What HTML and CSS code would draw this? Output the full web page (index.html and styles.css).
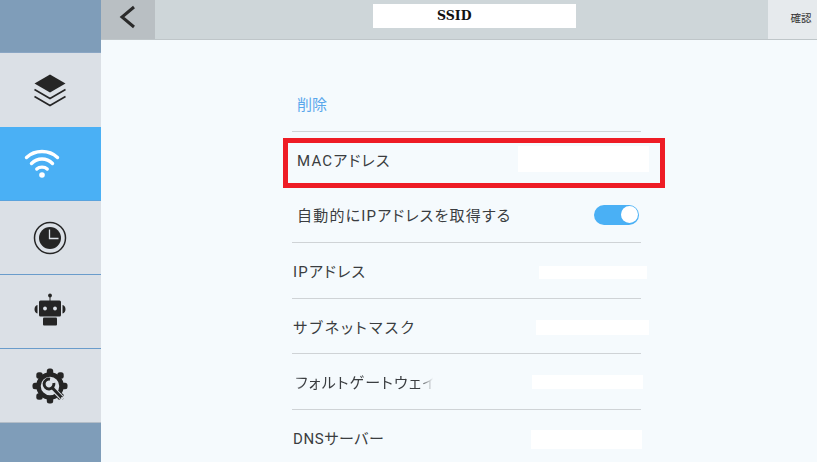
FILE: index.html
```html
<!DOCTYPE html>
<html lang="ja">
<head>
<meta charset="utf-8">
<title>SSID</title>
<link rel="stylesheet" href="styles.css">
</head>
<body>
<div class="app">
  <nav class="sidebar">
    <div class="side-cap side-cap-top"></div>
    <a class="nav-item">
      <svg class="icon" viewBox="0 0 40 40"><path class="fill" d="M20 4.500 35.500 13.500 20 22.500 4.500 13.500Z"/><path class="line" d="M4.500 19.500 20 28.500 35.500 19.500M4.500 26.500 20 35.500 35.500 26.500"/></svg>
    </a>
    <a class="nav-item active">
      <svg class="icon icon-wifi" viewBox="0 0 40 40"><path class="wifi" d="M4.500 12.500C13 4.500 27 4.500 35.500 12.500M9.500 18.500C15.500 12.500 24.500 12.500 30.500 18.500M14.800 24C17.500 21.500 22.500 21.500 25.200 24"/><circle class="wifi-dot" cx="20" cy="30" r="2.800"/></svg>
    </a>
    <a class="nav-item">
      <svg class="icon" viewBox="0 0 40 40"><circle class="ring" cx="20" cy="20" r="15.500"/><circle class="fill" cx="20" cy="20" r="11"/><path class="hands" d="M19.500 11.500V20.500H28.500"/></svg>
    </a>
    <a class="nav-item">
      <svg class="icon" viewBox="0 0 40 40"><circle class="fill" cx="20" cy="3.500" r="1.900"/><path class="thin" d="M20 4V9"/><rect class="fill" x="9" y="8.500" width="22" height="16" rx="1.500"/><rect class="fill" x="13" y="25.500" width="14" height="8" rx="1"/><path class="fill" d="M7.500 13V21.500C3.500 20.500 3.500 14 7.500 13ZM32.500 13V21.500C36.500 20.500 36.500 14 32.500 13Z"/><circle class="eye" cx="15" cy="16.500" r="1.900"/><circle class="eye" cx="25" cy="16.500" r="1.900"/></svg>
    </a>
    <a class="nav-item">
      <svg class="icon" viewBox="0 0 40 40"><circle class="gear-ring" cx="20" cy="20" r="11.500"/><g class="teeth"><rect x="16.800" y="2.500" width="6.400" height="6.500" rx="2.500"/><rect x="16.800" y="31" width="6.400" height="6.500" rx="2.500"/><rect x="2.500" y="16.800" width="6.500" height="6.400" rx="2.500"/><rect x="31" y="16.800" width="6.500" height="6.400" rx="2.500"/><rect x="6.300" y="6.300" width="6.400" height="6.400" rx="2.500"/><rect x="27.300" y="6.300" width="6.400" height="6.400" rx="2.500"/><rect x="6.300" y="27.300" width="6.400" height="6.400" rx="2.500"/><rect x="27.300" y="27.300" width="6.400" height="6.400" rx="2.500"/></g><path class="wrench-halo" d="M24.500 24.500 33 33"/><path class="wrench-head" d="M23.800 17A4.900 4.900 0 1 1 20 13.200"/><path class="wrench" d="M22 21.500 32 32"/><circle class="eye" cx="32" cy="32" r="1"/></svg>
    </a>
    <div class="side-cap"></div>
  </nav>
  <main class="main">
    <header class="topbar">
      <button class="back" aria-label="戻る">
        <svg class="back-icon" viewBox="0 0 54 40"><path d="M33 7 21 17 33 27"/></svg>
      </button>
      <div class="title"><span>SSID</span></div>
      <button class="confirm">確認</button>
    </header>
    <section class="content">
      <ul class="list">
        <li class="row row-delete">削除</li>
        <li class="row row-mac">
          <span>MACアドレス</span>
          <span class="mask mask-mac"></span>
          <span class="highlight"></span>
        </li>
        <li class="row">
          <span>自動的にIPアドレスを取得する</span>
          <span class="toggle"><span class="knob"></span></span>
        </li>
        <li class="row row-low">
          <span class="label-left">IPアドレス</span>
          <span class="mask mask-ip"></span>
        </li>
        <li class="row row-low">
          <span class="label-left label-wide">サブネットマスク</span>
          <span class="mask mask-subnet"></span>
        </li>
        <li class="row row-low">
          <span class="fade">フォルトゲートウェイ</span>
          <span class="mask mask-gateway"></span>
        </li>
        <li class="row row-low">
          <span class="label-left label-tight">DNSサーバー</span>
          <span class="mask mask-dns"></span>
        </li>
      </ul>
    </section>
  </main>
</div>
</body>
</html>
```

FILE: styles.css
```css
* { box-sizing: border-box; }
html, body { margin: 0; padding: 0; }
body {
  width: 817px;
  height: 462px;
  overflow: hidden;
  font-family: Roboto, "Noto Sans CJK JP", sans-serif;
  color: #3a3d40;
}
.app { display: flex; width: 817px; height: 462px; overflow: hidden; }

/* sidebar */
.sidebar { width: 101px; flex: none; display: flex; flex-direction: column; background: #dbe0e6; }
.side-cap { flex: 1; background: #7f9db9; border-top: 1px solid #b4bec8; }
.side-cap-top { flex: none; height: 53px; border-top: 0; border-bottom: 1px solid #8aa6c4; }
.nav-item {
  height: 74px;
  flex: none;
  display: flex;
  align-items: center;
  justify-content: center;
  border-bottom: 1px solid #6a9ccb;
  padding-right: 1px;
}
.nav-item:nth-child(2) { border-bottom-color: #dbe0e6; }
.nav-item:nth-child(6) { border-bottom: 0; height: 73px; }
.nav-item.active { background: #4ab0f5; border-bottom-color: #5aa3dd; }
.icon { width: 40px; height: 40px; display: block; }
.icon-wifi { margin-right: 17px; margin-top: 2px; }
.fill { fill: #252525; }
.line { fill: none; stroke: #252525; stroke-width: 1.600; }
.thin { fill: none; stroke: #252525; stroke-width: 1; }
.ring { fill: none; stroke: #252525; stroke-width: 1.500; }
.hands { fill: none; stroke: #dbe0e6; stroke-width: 1.300; }
.eye { fill: #dbe0e6; }
.wifi { fill: none; stroke: #fff; stroke-width: 3.400; stroke-linecap: round; }
.wifi-dot { fill: #fff; }
.gear-ring { fill: none; stroke: #252525; stroke-width: 4.500; }
.teeth { fill: #252525; }
.wrench { fill: none; stroke: #252525; stroke-width: 3; }
.wrench-halo { fill: none; stroke: #dbe0e6; stroke-width: 5; }
.wrench-head { fill: none; stroke: #252525; stroke-width: 3; }

/* header */
.main { flex: 1; min-width: 0; display: flex; flex-direction: column; background: #f5fafd; }
.topbar {
  height: 40px;
  flex: none;
  display: flex;
  background: #ced6d9;
  border-bottom: 1px solid #bfc6c9;
}
.back { width: 54px; flex: none; padding: 0; border: 0; background: #b9bfc3; display: block; }
.back-icon { display: block; width: 54px; height: 40px; }
.back-icon path { fill: none; stroke: #2a2a2a; stroke-width: 3; }
.title {
  width: 203px;
  height: 24px;
  margin: 4px 0 0 218px;
  padding-left: 64px;
  background: #fff;
  font: bold 12.500px/23px "DejaVu Serif", serif;
  color: #111;
}
.confirm {
  width: 49px;
  height: 39px;
  margin-left: auto;
  border: 0;
  padding: 0 0 5px 17px;
  background: #e6eaed;
  font: 10.500px "Noto Sans CJK JP", sans-serif;
  color: #333;
}

/* list */
.content { flex: 1; min-height: 0; overflow: hidden; padding-left: 191px; }
.list { list-style: none; margin: 0; padding: 0; width: 349px; }
.row {
  height: 55.500px;
  display: flex;
  align-items: center;
  justify-content: space-between;
  padding: 0 0 0 5px;
  border-bottom: 1px solid #cfd3d6;
  font-size: 15px;
  letter-spacing: 1.200px;
  font-feature-settings: "palt";
  white-space: nowrap;
}
.row-delete { height: 92px; padding-top: 35px; letter-spacing: 0; color: #5aa7ec; }
.row-low { padding-top: 1px; }
.row-mac { position: relative; border-bottom-color: transparent; }
.label-left { margin-left: -4px; }
.label-wide { letter-spacing: 2.200px; }
.label-tight { letter-spacing: .6px; }
.highlight {
  position: absolute;
  left: -9px;
  top: 6px;
  width: 382px;
  height: 50px;
  border: 5px solid #ee1c25;
}
.fade {
  width: 142px;
  margin-left: -2px;
  overflow: hidden;
  -webkit-mask-image: linear-gradient(90deg, rgba(0,0,0,.5), #000 8px, #000 125px, transparent 138px);
  mask-image: linear-gradient(90deg, rgba(0,0,0,.5), #000 8px, #000 125px, transparent 138px);
}
.mask { display: block; background: #fff; }
.mask-mac { width: 131px; height: 26px; margin-right: -8px; }
.mask-ip { width: 108px; height: 13px; margin-right: -6px; margin-top: 3px; }
.mask-subnet { width: 113px; height: 15px; margin-right: -8px; margin-top: 3px; }
.mask-gateway { width: 111px; height: 14px; margin-right: -2px; margin-top: 1px; }
.mask-dns { width: 111px; height: 19px; margin-right: -1px; margin-top: 5px; }

/* switch */
.toggle {
  width: 45px;
  height: 20px;
  margin-right: 2px;
  padding: 1.500px 1.500px;
  display: flex;
  justify-content: flex-end;
  border-radius: 10px;
  background: #4ab0f5;
}
.knob { width: 17px; height: 17px; border-radius: 50%; background: #fff; }
```
